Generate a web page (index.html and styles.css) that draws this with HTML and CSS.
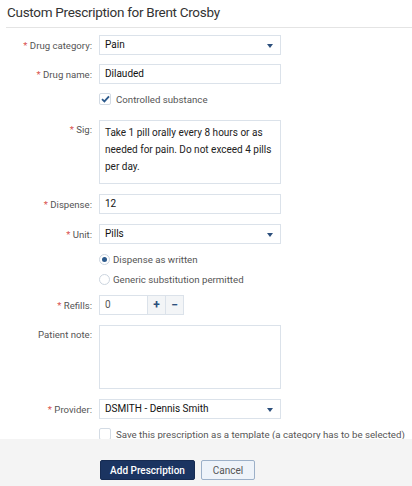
FILE: index.html
```html
<!DOCTYPE html>
<html>
<head>
<meta charset="utf-8">
<link rel="stylesheet" href="styles.css">
</head>
<body>
<div class="header"><h1>Custom Prescription for Brent Crosby</h1></div>
<form class="form">
  <div class="row r1">
    <label class="lbl"><span class="req">*</span> Drug category:</label>
    <div class="select field">Pain<span class="caret"></span></div>
  </div>
  <div class="row r2">
    <label class="lbl"><span class="req">*</span> Drug name:</label>
    <div class="input field">Dilauded</div>
  </div>
  <div class="row r3">
    <div class="lbl"></div>
    <div class="check on"><span class="box"><svg width="9" height="8" viewBox="0 0 9 8"><path d="M1 4.2 L3.4 6.4 L8 1.4" fill="none" stroke="#2c5a8c" stroke-width="1.8"/></svg></span><span class="ctext">Controlled substance</span></div>
  </div>
  <div class="row r4">
    <label class="lbl top"><span class="req">*</span> Sig:</label>
    <div class="textarea field">Take 1 pill orally every 8 hours or as needed for pain. Do not exceed 4 pills per day.</div>
  </div>
  <div class="row r5">
    <label class="lbl"><span class="req">*</span> Dispense:</label>
    <div class="input field">12</div>
  </div>
  <div class="row r6">
    <label class="lbl"><span class="req">*</span> Unit:</label>
    <div class="select field">Pills<span class="caret"></span></div>
  </div>
  <div class="row r7">
    <div class="lbl"></div>
    <div class="radio"><span class="dot on"></span><span class="ctext">Dispense as written</span></div>
  </div>
  <div class="row r8">
    <div class="lbl"></div>
    <div class="radio"><span class="dot"></span><span class="ctext">Generic substitution permitted</span></div>
  </div>
  <div class="row r9">
    <label class="lbl"><span class="req">*</span> Refills:</label>
    <div class="spin">
      <div class="spinval">0</div>
      <div class="spinbtn">+</div>
      <div class="spinbtn">&minus;</div>
    </div>
  </div>
  <div class="row r10">
    <label class="lbl top">Patient note:</label>
    <div class="textarea note field"></div>
  </div>
  <div class="row r11">
    <label class="lbl"><span class="req">*</span> Provider:</label>
    <div class="select field">DSMITH - Dennis Smith<span class="caret"></span></div>
  </div>
  <div class="row r12">
    <div class="lbl"></div>
    <div class="check"><span class="box"></span><span class="ctext">Save this prescription as a template (a category has to be selected)</span></div>
  </div>
</form>
<div class="footer">
  <button class="btn primary" type="button">Add Prescription</button>
  <button class="btn secondary" type="button">Cancel</button>
</div>
</body>
</html>
```
FILE: styles.css
```css
* { box-sizing: border-box; }
html, body { margin: 0; padding: 0; background: #fff; }
body { font-family: Roboto, "Liberation Sans", sans-serif; font-size: 10px; color: #222; width: 412px; height: 486px; overflow: hidden; position: relative; }
.header { margin-left: 6px; border-bottom: 1px solid #e4e4e4; }
h1 { margin: 0; padding: 4px 1px 6px; font-size: 13.5px; letter-spacing: -0.3px; line-height: 17px; font-weight: 400; color: #333; }
.form { display: flex; flex-direction: column; }
.row { display: flex; align-items: center; }
.lbl { width: 92px; margin-right: 7px; text-align: right; color: #555; flex: none; font-size: 9.6px; }
.lbl.top { align-self: flex-start; padding-top: 4px; }
.req { color: #d9534f; }
.field { width: 182px; border: 1px solid #dbe2ea; background: #fff; color: #222; }
.input, .select { height: 20px; line-height: 18px; padding: 0 5px; position: relative; color: #111; }
.caret { position: absolute; right: 7px; top: 8px; width: 0; height: 0; border-left: 3px solid transparent; border-right: 3px solid transparent; border-top: 4px solid #2c4f7c; }
.textarea { height: 64px; padding: 3px 5px; line-height: 17px; }
.r1 { margin-top: 7px; }
.r2 { margin-top: 9px; }
.r3 { margin-top: 9px; }
.r4 { margin-top: 15px; }
.r5 { margin-top: 10px; }
.r6 { margin-top: 10px; }
.r7 { margin-top: 9px; }
.r8 { margin-top: 8px; }
.r9 { margin-top: 10px; }
.r10 { margin-top: 10px; }
.r11 { margin-top: 10px; }
.r12 { margin-top: 9px; }
.check, .radio { display: flex; align-items: center; color: #555; height: 12px; white-space: nowrap; }
.ctext { font-size: 9.7px; }
.box { width: 12px; height: 12px; border: 1px solid #d3dbe4; border-radius: 2px; background: #fff; display: flex; align-items: center; justify-content: center; margin-right: 5px; }
.dot { width: 11px; height: 11px; border: 1px solid #ccd5df; border-radius: 50%; background: #fff; margin-right: 3px; position: relative; }
.dot.on::after { content: ""; position: absolute; left: 2px; top: 2px; width: 5px; height: 5px; border-radius: 50%; background: #2c5a8c; }
.spin { display: flex; height: 20px; border: 1px solid #dbe2ea; }
.spinval { width: 47px; padding: 0 5px; line-height: 18px; color: #555; }
.spinbtn { width: 18px; border-left: 1px solid #dbe2ea; background: #f3f5f7; color: #2c4f7c; font-weight: 700; font-size: 12px; line-height: 18px; text-align: center; }
.footer { position: absolute; left: 0; right: 0; top: 439px; bottom: 0; background: #f4f4f4; display: flex; align-items: flex-start; padding: 21px 0 0 100px; gap: 6px; }
.btn { height: 20px; font-family: Roboto, "Liberation Sans", sans-serif; font-size: 10px; padding: 0; border-radius: 2px; }
.primary { width: 95px; background: #1b3461; color: #fff; border: 1px solid #162b52; font-weight: 500; }
.secondary { width: 54px; background: #eef3f9; color: #555; border: 1px solid #9cb0c8; }
```
